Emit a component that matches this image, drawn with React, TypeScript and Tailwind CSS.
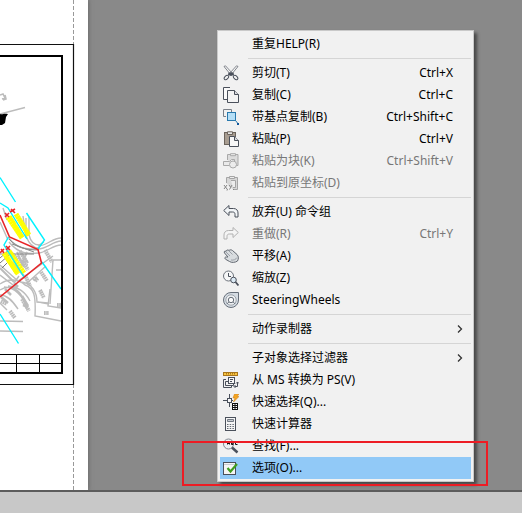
import type { ReactNode } from "react";

type Item = {
  label: string;
  shortcut?: string;
  icon?: ReactNode;
  disabled?: boolean;
  submenu?: boolean;
  active?: boolean;
};

function Icon({ children }: { children: ReactNode }) {
  return (
    <svg viewBox="0 0 16 16" className="h-4 w-4" fill="none" stroke="#4a505b" strokeWidth="1" aria-hidden="true">
      {children}
    </svg>
  );
}

const cutIcon = (
  <Icon>
    <path d="M1 1.500 2.500.8 9.500 8.500 8 10zM15 1.500 13.500.8 6.500 8.500 8 10z" fill="#f7f7f7" stroke="#666b74" strokeWidth=".8" />
    <path d="M5.500 7.500h5l.5 2.500-3 1-3-1z" fill="#4a505b" stroke="none" />
    <ellipse cx="3.400" cy="12.500" rx="2.600" ry="1.700" transform="rotate(-45 3.400 12.500)" fill="#f1f1f1" />
    <ellipse cx="12.600" cy="12.500" rx="2.600" ry="1.700" transform="rotate(45 12.600 12.500)" fill="#f1f1f1" />
  </Icon>
);

const copyIcon = (
  <Icon>
    <path d="M4 12.500H.5V.5H7" fill="#fafafa" />
    <path d="M4.500 3.500h7l4 4v8h-11z" fill="#f4f4f4" />
    <path d="M11.500 3.500v4h4" fill="#d9dade" />
  </Icon>
);

const baseCopyIcon = (
  <Icon>
    <path d="M3 7.500H.5v-7h8V3" stroke="#7b8088" />
    <rect x="4.500" y="3.500" width="8" height="8" fill="#b5dff7" stroke="#2979ad" />
    <path d="m12.500 11.500 2 2.500" stroke="#2979ad" />
    <path d="M14 14h2v2h-2z" fill="#12579a" stroke="none" />
  </Icon>
);

const pasteIcon = (
  <Icon>
    <rect x="1.500" y="1.500" width="11" height="12" fill="#a79c90" stroke="#6b635b" />
    <path d="M4.500.8h5v2.700h-5z" fill="#e6e6e6" stroke="#6b635b" />
    <path d="M6.500 5.500h5l4 4v6h-9z" fill="#f7f7f7" />
    <path d="M11.500 5.500v4h4" fill="#d9dade" />
  </Icon>
);

const pasteBlockIcon = (
  <Icon>
    <g stroke="#a9a9a9">
      <path d="M4.500 7V1.500h10.500v11h-3" fill="#dcdcdc" />
      <path d="M7.500.7h5v2h-5z" fill="#eee" />
      <path d="M.5 12.500v-4h6l2-2h3v4" fill="#eaeaea" />
      <path d="M.5 12.500h6" />
      <circle cx="10" cy="11.500" r="3.500" fill="#ececec" />
    </g>
  </Icon>
);

const pasteCoordIcon = (
  <Icon>
    <g stroke="#a5a5a5">
      <path d="M3.500 8V2.500h11v12H10" fill="#d7d7d7" />
      <path d="M6.500 1.500h5v2h-5z" fill="#eee" />
      <path d="M8 5.500h4.500v7H10" fill="#ececec" />
      <path d="m1 10 3 4M4 10l-3 4M6 10l1.500 2M9 10l-2.500 4.500M4.500 14l-.5 1.500M10 14.500h1" stroke="#858585" />
    </g>
  </Icon>
);

const undoPath = "M.7 6.500 6 1.500v3h4.500c3 0 4.500 2 4.500 4.500v4h-3v-2.500c0-1.800-.8-2.500-2.500-2.500H6v3.500z";

const undoIcon = (
  <Icon>
    <path d={undoPath} fill="#f2f5f7" />
  </Icon>
);

const redoIcon = (
  <Icon>
    <path d={undoPath} transform="matrix(-1 0 0 1 16 0)" stroke="#b1b1b1" fill="#f4f4f4" />
  </Icon>
);

const panIcon = (
  <Icon>
    <path
      d="M1.500 5C.5 3.500 2 2.500 3 3.500 3 2 5 1.500 6 2.500c1-1 2.500-.8 3.500 0l4.500 4c2 2 1.500 4.500.5 6.500-2 1.500-6 2-8 .5L3 11.500c-2-1-1-3 .5-2.500L5 9z"
      fill="#d8dcdf"
      stroke="#626871"
    />
    <path d="m3 4 4 4M6 3l3.500 3.500M8 12c2.500.5 5-.5 6-2.500" stroke="#8d929a" strokeWidth=".8" />
  </Icon>
);

const zoomIcon = (
  <Icon>
    <circle cx="5.500" cy="6" r="5" fill="#f6f7f8" stroke="#6c727b" />
    <path d="M5.500 3v3.500H8" />
    <circle cx="10.500" cy="10" r="2.800" fill="#dbeaf5" />
    <path d="m12.500 12 3 3.500" strokeWidth="1.800" />
  </Icon>
);

const wheelIcon = (
  <Icon>
    <path d="M8 .5h7.500V8A7.500 7.500 0 1 1 8 .5z" fill="#d5dce3" stroke="#666e79" />
    <circle cx="8" cy="8" r="5.200" fill="#eef0f2" stroke="#8d949d" strokeWidth=".8" />
    <circle cx="8" cy="8" r="2.700" fill="#f8f8f8" stroke="#666e79" />
    <path d="m3.800 12 2-2M12.200 12l-2-2" stroke="#666e79" />
  </Icon>
);

const spaceIcon = (
  <Icon>
    <rect x=".5" y=".5" width="14" height="3" fill="#f8c440" stroke="#a9751a" />
    <path d="M3.500 1v1.500M5.500 1v1.500M7.500 1v1.500M9.500 1v1.500M11.500 1v1.500" stroke="#946313" strokeWidth=".8" />
    <path d="M3 7.500H.5v8h8V14" />
    <path d="M5 9.500H2.500v4h8V12" />
    <rect x="5.500" y="5.500" width="6" height="6" fill="#f7f7f7" />
    <path d="M7 7.500h3M7 9.500h2M11.500 14.500h3V10M13 11.500l1.500-1.500 1.500 1.500M12.500 13 11 14.500l1.500 1.500" />
  </Icon>
);

const quickSelectIcon = (
  <Icon>
    <path d="M0 6.500h4M8 6.500h2M6.500 0v4M6.500 9v4" />
    <rect x="4.500" y="4.500" width="4" height="4" fill="#f8f8f8" />
    <path d="M11.500 0H16l-2 2.500h2L10.500 8l1.500-4h-2z" fill="#f5a623" stroke="#cf7a0c" strokeWidth=".5" />
    <rect x="9.500" y="9.500" width="5" height="6" fill="#fff" stroke="#111" />
    <path d="M12 9.500v6M9.500 11.500h5M9.500 13.500h5" stroke="#111" />
  </Icon>
);

const calculatorIcon = (
  <Icon>
    <rect x="2.500" y="1.500" width="10" height="13" fill="#f5f5f5" />
    <path d="M4.500 3.500h6v2h-6z" fill="#c5cad0" stroke="#727983" />
    <path d="M4 8.500h7M4 10.500h7M4 12.500h7" stroke="#666c75" strokeDasharray="1.500 1.200" />
  </Icon>
);

const findIcon = (
  <Icon>
    <circle cx="5.500" cy="6" r="5" fill="#eef1f3" stroke="#838891" />
    <path d="m9 9.500 5.500 5" strokeWidth="2.500" />
    <path d="M4.500 6.500V4.500l1-1 1 1v2M4.500 5.500h2M8.500 3.500v3h1.500v-3zM8.500 5H10M14.500 3.500h-2v3h2" stroke="#111" />
  </Icon>
);

const optionsIcon = (
  <Icon>
    <rect x=".5" y="2.500" width="12" height="12" fill="#f5f5f5" />
    <path d="M1 4.500h11" stroke="#c8ccd1" />
    <path d="m4.500 8 3 3.500L14 4" stroke="#3f9d1f" strokeWidth="2.200" />
  </Icon>
);

const groups: Item[][] = [
  [{ label: "重复HELP(R)" }],
  [
    { label: "剪切(T)", shortcut: "Ctrl+X", icon: cutIcon },
    { label: "复制(C)", shortcut: "Ctrl+C", icon: copyIcon },
    { label: "带基点复制(B)", shortcut: "Ctrl+Shift+C", icon: baseCopyIcon },
    { label: "粘贴(P)", shortcut: "Ctrl+V", icon: pasteIcon },
    { label: "粘贴为块(K)", shortcut: "Ctrl+Shift+V", icon: pasteBlockIcon, disabled: true },
    { label: "粘贴到原坐标(D)", icon: pasteCoordIcon, disabled: true },
  ],
  [
    { label: "放弃(U) 命令组", icon: undoIcon },
    { label: "重做(R)", shortcut: "Ctrl+Y", icon: redoIcon, disabled: true },
    { label: "平移(A)", icon: panIcon },
    { label: "缩放(Z)", icon: zoomIcon },
    { label: "SteeringWheels", icon: wheelIcon },
  ],
  [{ label: "动作录制器", submenu: true }],
  [
    { label: "子对象选择过滤器", submenu: true },
    { label: "从 MS 转换为 PS(V)", icon: spaceIcon },
    { label: "快速选择(Q)...", icon: quickSelectIcon },
    { label: "快速计算器", icon: calculatorIcon },
    { label: "查找(F)...", icon: findIcon },
    { label: "选项(O)...", icon: optionsIcon, active: true },
  ],
];

function MenuItem({ item }: { item: Item }) {
  return (
    <button
      type="button"
      role="menuitem"
      disabled={item.disabled}
      aria-haspopup={item.submenu ? "menu" : undefined}
      className={`flex h-[22px] w-full items-center pr-2 pl-[3px] text-left whitespace-pre ${
        item.active ? "bg-[#91c9f7]" : ""
      } ${item.disabled ? "text-[#777777]" : "text-black"}`}
    >
      <span className="mr-[13px] w-4 shrink-0">{item.icon}</span>
      <span className="flex-1">{item.label}</span>
      <span>{item.shortcut}</span>
      <span className="ml-1 w-1.5 shrink-0">
        {item.submenu && (
          <svg viewBox="0 0 6 8" className="h-2 w-1.5" fill="none" stroke="#333" strokeWidth="1.300" aria-hidden="true">
            <path d="m1 .5 3.500 3.500L1 7.500" />
          </svg>
        )}
      </span>
    </button>
  );
}

function Drawing() {
  return (
    <svg width="88" height="490" viewBox="0 0 88 490" fill="none" className="block" aria-hidden="true">
      <path d="M73.500 0V490" stroke="#999" strokeDasharray="4 2" />
      <path d="M0 44.500H73.500V384.500H0" stroke="#111" strokeWidth="1.200" />
      <g stroke="#bcbcbc" strokeWidth="1.400">
        <path d="M0 114 25 107.500" />
        <path d="M0 95l3-1 2 4-3 1M3 100l3-1-1-4" strokeWidth="1.600" />
        <path d="M9 238c8 12 20 11 29 11s15-8 23-8M9 242c10 13 22 12 30 11s14-8 22-8M38 246c9 0 14-8 23-8M29 217v18c2 8 6 10 10 10l5-3M26 218v18c3 8 8 12 13 12M3 208l4 12M0 222l8 18M23 216l3 22" />
        <path d="M20 251l8 12M17 252l7 15M27 252l-6 14M12 262l12 14M0 268l14 14" strokeWidth="2" />
        <path d="M53 260 50 304M53 260h8M56 270h5M18 281 53 256M26 284l20-18M0 265 18 281M0 275l17 13M14 283l5-7" />
        <path d="M0 284c8-6 19-5 25 1 9 3 11 10 10 31l26 5M20 282c12 0 17 11 17 20l11 1M50 289l-2 17 13 2M38 302l11 2" />
        <path d="M0 290c9-6 18-1 22 6M4 287c10 0 20 9 23 22M8 286c11 1 18 7 22 15M0 295c7 0 12 5 18 14M0 303l7 7M0 321l23 .5M0 331l23 .5" />
        <path d="M5 289l6 6M1 297l7 6M22 296l6 10M23 305l5 2M14 283l4 4" strokeWidth="2.500" />
        <path d="M41 272l6 9M45 250l7 12M25 275l5 11M22 260l6 10M33 280l4-3M35 281l3-3" strokeWidth="4" strokeDasharray="1.700 .5" />
        <path d="M7 250l20 16M20 251l7 12M22 299l7 12M10 311l5 7M44 313h5M57 305h4M40 290l4 8M1 301l6 3" strokeWidth="4" strokeDasharray="1.700 .5" />
        <path d="M0 254h34M9 239c8 9 18 11 29 11M12 244l22 8" stroke="#8a8a8a" strokeWidth="1" />
        <path d="M0 258l8-7M0 263l9-8M2 268l8-8" stroke="#777" strokeWidth="1" />
      </g>
      <g stroke="#ffff00" strokeWidth="5" strokeDasharray="2.500 .2">
        <path d="M8 217 22 238M16 214 29 235M4 253 18 274M9 251 24 273" />
        <path d="M10 216 23 237M5 256 16 273M19 218 28 236" strokeWidth="3" />
      </g>
      <g stroke="#00f2ff" strokeWidth="1.400">
        <path d="M0 177.500 15.500 202M0 203l8 5 19 31M26.500 213 44.500 240 38 249M42 262l19 27M8.500 237 4 245l20 32M0 314l18.500 29.500" />
      </g>
      <path d="M0 215 9.500 237 38 249.500 41.500 263 0 297" stroke="#e82428" strokeWidth="1.600" />
      <path
        d="m5 213 4 4M5 217l4-4M11 209l4 4M10 212l5-3M1 249l3 4M0 253l4-4M6 246l4 4M6 250l4-4"
        stroke="#e82428"
        strokeWidth="1.600"
      />
      <path d="M0 114c3 1 3-1 8 0l-2 3-1 6-3 2H0z" fill="#000" />
      <path d="M0 56H62V373H0" stroke="#000" strokeWidth="2" />
      <path d="M0 354.500H62M0 363.500H62M16.500 354V373M39.500 354V373" stroke="#000" />
    </svg>
  );
}

export default function App() {
  return (
    <div className="relative flex min-h-screen flex-col overflow-hidden bg-[#898989] font-['Noto_Sans','Noto_Sans_CJK_SC',sans-serif] text-xs">
      <main className="flex flex-1">
        <div className="w-[88px] shrink-0 overflow-hidden bg-white shadow-[1px_0_4px_#6c6c6c]">
          <Drawing />
        </div>
      </main>
      <footer className="h-[23px] border-t-2 border-[#5c5c5c] bg-[#c8c8c8]" />

      <div
        role="menu"
        className="absolute top-[30px] left-[217px] w-[257px] border border-[#c9c9c9] bg-[#f1f1f1] p-0.5 shadow-[3px_3px_3px_#494949]"
      >
        {groups.map((group, index) => (
          <div key={index} role="group">
            {index > 0 && <div role="separator" className="my-[3px] ml-7 h-px bg-[#d5d5d5]" />}
            {group.map((item) => (
              <MenuItem key={item.label} item={item} />
            ))}
          </div>
        ))}
      </div>

      <div className="pointer-events-none absolute top-[441px] left-[182px] h-[45px] w-[306px] border-2 border-[#ed1c24]" />
    </div>
  );
}
